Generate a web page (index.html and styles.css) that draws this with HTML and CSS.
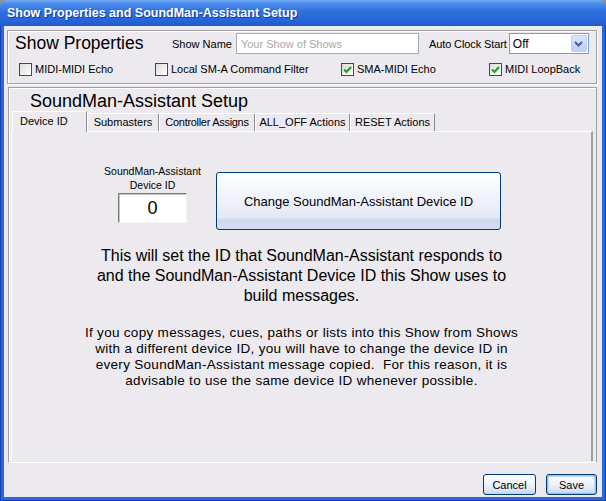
FILE: index.html
```html
<!DOCTYPE html>
<html lang="en">
<head>
    <meta charset="UTF-8">
    <title>Show Properties and SoundMan-Assistant Setup</title>
    <link rel="stylesheet" href="styles.css">
</head>
<body>
<div class="window">
    <div class="titlebar">Show Properties and SoundMan-Assistant Setup</div>
    <div class="frame">
        <div class="client">

            <!-- Show properties -->
            <div class="group props">
                <div class="props-top">
                    <h2 class="props-title">Show Properties</h2>
                    <label class="field-label" for="showName">Show Name</label>
                    <input id="showName" class="text-input" type="text" placeholder="Your Show of Shows">
                    <label class="field-label clock-label">Auto Clock Start</label>
                    <div class="combo">
                        <span>Off</span>
                        <span class="combo-btn">
                            <svg width="9" height="6" viewBox="0 0 9 6"><polyline points="1,1 4.5,4.5 8,1" fill="none" stroke="#4d6185" stroke-width="2"/></svg>
                        </span>
                    </div>
                </div>
                <div class="props-checks">
                    <label class="check"><span class="box"></span>MIDI-MIDI Echo</label>
                    <label class="check"><span class="box"></span>Local SM-A Command Filter</label>
                    <label class="check"><span class="box">
                        <svg width="11" height="11" viewBox="0 0 11 11"><polyline points="2,5.5 4.5,8 9,3" fill="none" stroke="#21a121" stroke-width="2.2"/></svg>
                    </span>SMA-MIDI Echo</label>
                    <label class="check"><span class="box">
                        <svg width="11" height="11" viewBox="0 0 11 11"><polyline points="2,5.5 4.5,8 9,3" fill="none" stroke="#21a121" stroke-width="2.2"/></svg>
                    </span>MIDI LoopBack</label>
                </div>
            </div>

            <!-- SoundMan-Assistant setup -->
            <div class="group setup">
                <h2 class="setup-title">SoundMan-Assistant Setup</h2>
                <div class="tabs">
                    <div class="tab active tab-device">Device ID</div>
                    <div class="tab tab-sub">Submasters</div>
                    <div class="tab tab-ctrl">Controller Assigns</div>
                    <div class="tab tab-off">ALL_OFF Actions</div>
                    <div class="tab tab-reset">RESET Actions</div>
                </div>
                <div class="panel">
                    <div class="device-row">
                        <div class="device-id">
                            <span>SoundMan-Assistant<br>Device ID</span>
                            <div class="id-box">0</div>
                        </div>
                        <button class="change-btn">Change SoundMan-Assistant Device ID</button>
                    </div>
                    <p class="lead">This will set the ID that SoundMan-Assistant responds to<br>and the SoundMan-Assistant Device ID this Show uses to<br>build messages.</p>
                    <p class="note">If you copy messages, cues, paths or lists into this Show from Shows<br>with a different device ID, you will have to change the device ID in<br>every SoundMan-Assistant message copied.&nbsp; For this reason, it is<br>advisable to use the same device ID whenever possible.</p>
                </div>
            </div>

            <div class="footer">
                <button class="btn btn-cancel">Cancel</button>
                <button class="btn btn-save">Save</button>
            </div>
        </div>
    </div>
</div>
</body>
</html>
```

FILE: styles.css
```css
* {
    box-sizing: border-box;
}

body {
    margin: 0;
    background: #8a8f99;
    font-family: "Liberation Sans", Arial, sans-serif;
    font-size: 11px;
    color: #000;
}

.window {
    width: 606px;
    height: 501px;
    display: flex;
    flex-direction: column;
}

.titlebar {
    flex: none;
    height: 26px;
    padding: 4px 0 0 7px;
    border-radius: 7px 7px 0 0;
    background: linear-gradient(#74acf6 0%, #4a8ced 14%, #2e70dd 45%, #2764d7 80%, #1f5bd0 100%);
    color: #fff;
    font-weight: bold;
    font-size: 12.5px;
    line-height: 19px;
    text-shadow: 1px 1px 0 #0f3da0;
}

.frame {
    flex: 1;
    display: flex;
    padding: 0 4px 4px;
    background: #2a67dc;
    box-shadow: inset 1px 0 #1542b0, inset -1px 0 #1542b0, inset 0 -1px #1542b0;
}

.client {
    flex: 1;
    display: flex;
    flex-direction: column;
    padding: 4px 5px 0 3px;
    background: #eceaee;
}

/* group boxes */
.group {
    border: 1px solid #a0a0a4;
    box-shadow: inset 1px 1px 0 #fff, 1px 1px 0 #fff;
}

.props {
    flex: none;
    height: 54px;
    padding: 2px 0 0 7px;
}

.props-top {
    display: flex;
    align-items: center;
    height: 21px;
}

.props-title {
    margin: 0;
    width: 157px;
    font-size: 17.5px;
    font-weight: normal;
    line-height: 21px;
}

.field-label {
    font-size: 11px;
}

.text-input {
    width: 183px;
    height: 21px;
    margin-left: 4px;
    padding: 0 4px;
    border: 1px solid #a5acb2;
    font: 11px "Liberation Sans", Arial, sans-serif;
}

.text-input::placeholder {
    color: #a8a8a8;
}

.clock-label {
    margin-left: 10px;
    letter-spacing: -0.1px;
}

.combo {
    width: 80px;
    height: 21px;
    margin-left: 2px;
    display: flex;
    align-items: center;
    justify-content: space-between;
    padding: 1px 1px 1px 3px;
    border: 1px solid #7f9db9;
    background: #fff;
    font-size: 12px;
}

.combo-btn {
    width: 16px;
    height: 17px;
    display: flex;
    align-items: center;
    justify-content: center;
    border: 1px solid #b9cdf8;
    border-radius: 2px;
    background: linear-gradient(#dbe6fe, #bccff9);
}

.props-checks {
    display: grid;
    grid-template-columns: 136px 186px 148px auto;
    align-items: center;
    height: 16px;
    margin-top: 7px;
    padding-left: 4px;
}

.check {
    display: flex;
    align-items: center;
    gap: 3px;
    white-space: nowrap;
}

.box {
    width: 13px;
    height: 13px;
    display: flex;
    align-items: center;
    justify-content: center;
    border: 1px solid #1c5180;
    background: linear-gradient(135deg, #dcdcd7, #fff);
}

/* setup section */
.setup {
    flex: 1;
    display: flex;
    flex-direction: column;
    margin: 3px 0 0 1px;
    padding: 3px 2px 1px;
    border-bottom-color: #fff;
    box-shadow: inset 1px 1px 0 #fff;
}

.setup-title {
    margin: 0;
    padding-left: 19px;
    font-size: 18px;
    font-weight: normal;
    line-height: 20px;
}

.tabs {
    display: flex;
    align-items: flex-end;
    height: 20px;
    margin-left: 1px;
}

.tab {
    height: 18px;
    border: 1px solid #fff;
    border-right-color: #8e8f8f;
    border-bottom: none;
    font-size: 11px;
    line-height: 16px;
    text-align: center;
    white-space: nowrap;
    background: #eceaee;
}

.tab.active {
    position: relative;
    z-index: 1;
    height: 21px;
    margin-bottom: -1px;
    padding-left: 7px;
    text-align: left;
    line-height: 18px;
}

.tab-device { width: 75px; }
.tab-sub { width: 72px; }
.tab-ctrl { width: 96px; letter-spacing: -0.3px; }
.tab-off { width: 95px; }
.tab-reset { width: 85px; }

.panel {
    flex: 1;
    margin-right: 1px;
    border-top: 1px solid #fff;
    border-left: 1px solid #fff;
    border-right: 2px solid #a0a0a4;
    text-align: center;
}

.device-row {
    display: flex;
    align-items: flex-start;
    margin: 32px 0 0 92px;
}

.device-id {
    width: 97px;
    display: flex;
    flex-direction: column;
    align-items: center;
    font-size: 10.5px;
    line-height: 14px;
}

.id-box {
    width: 69px;
    height: 30px;
    margin-top: 1px;
    border: 1px solid;
    border-color: #7a7a7a #f4f4f4 #f4f4f4 #7a7a7a;
    box-shadow: inset 1px 1px 0 #c4c4c4;
    background: #fff;
    font-size: 18px;
    line-height: 28px;
}

.change-btn {
    width: 285px;
    height: 58px;
    margin: 8px 0 0 15px;
    border: 1px solid #003c74;
    border-radius: 3px;
    background: linear-gradient(#fdfeff 0%, #f0f3fb 45%, #e2e8f6 80%, #cdd7ee 84%, #d6def2 100%);
    font: 13px "Liberation Sans", Arial, sans-serif;
    color: #000;
}

.lead {
    margin: 16px 0 0;
    font-size: 16px;
    line-height: 20px;
}

.note {
    margin: 19px 0 0;
    font-size: 13.5px;
    letter-spacing: 0.3px;
    line-height: 16px;
}

/* dialog buttons */
.footer {
    flex: none;
    height: 34px;
    display: flex;
    justify-content: flex-end;
    align-items: flex-start;
    gap: 10px;
    padding-top: 11px;
}

.btn {
    height: 21px;
    padding: 0;
    border: 1px solid #003c74;
    border-radius: 3px;
    background: linear-gradient(#fdfeff 0%, #eef2fb 50%, #d8e0f3 85%, #c6d1ec 100%);
    font: 11px "Liberation Sans", Arial, sans-serif;
    color: #000;
}

.btn-cancel {
    width: 53px;
}

.btn-save {
    width: 51px;
    box-shadow: inset 0 0 0 1px #9bbcf0, inset 0 0 0 2px #c2d6f7;
}
```
